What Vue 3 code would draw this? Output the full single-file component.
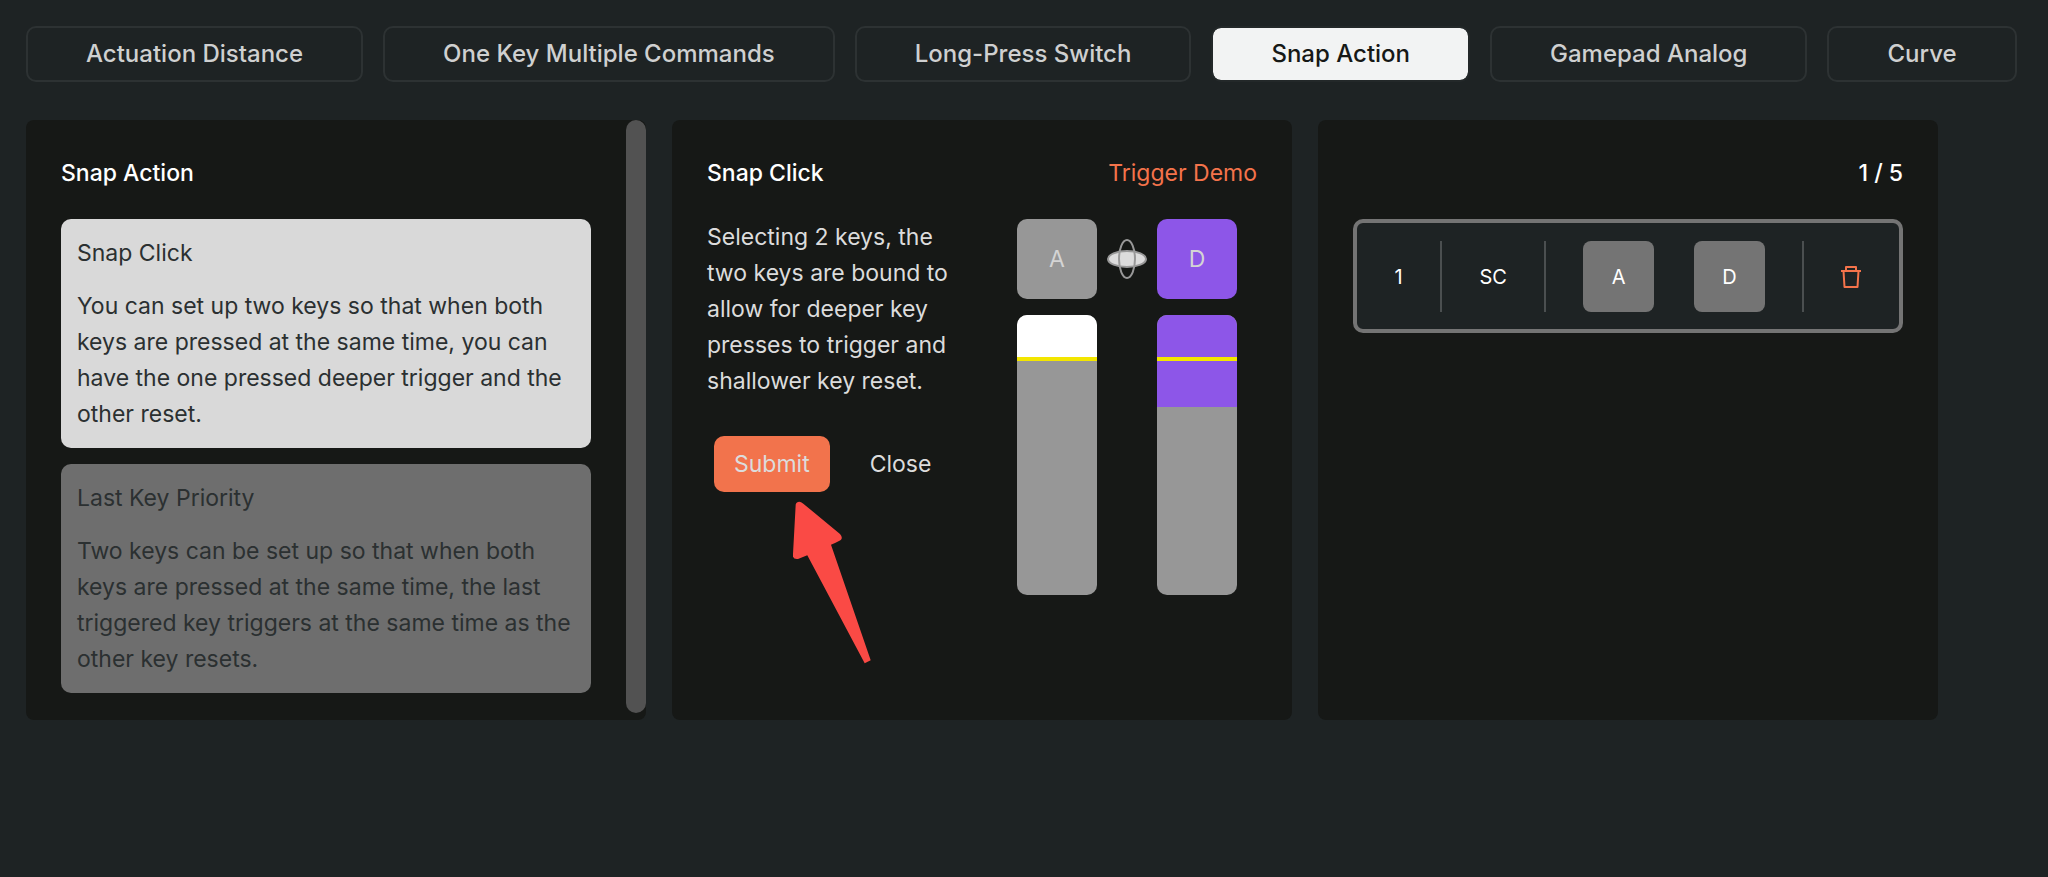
<script setup>
import { ref } from 'vue'

const tabs = [
  'Actuation Distance',
  'One Key Multiple Commands',
  'Long-Press Switch',
  'Snap Action',
  'Gamepad Analog',
  'Curve',
]
const activeTab = ref('Snap Action')

const modes = [
  {
    name: 'Snap Click',
    text: 'You can set up two keys so that when both keys are pressed at the same time, you can have the one pressed deeper trigger and the other reset.',
  },
  {
    name: 'Last Key Priority',
    text: 'Two keys can be set up so that when both keys are pressed at the same time, the last triggered key triggers at the same time as the other key resets.',
  },
]
const activeMode = ref('Snap Click')

const demoKeys = [
  { label: 'A', depth: 15, tone: 'idle' },
  { label: 'D', depth: 33, tone: 'live' },
]

const records = ref([{ id: 1, type: 'SC', keys: ['A', 'D'] }])
const maxRecords = 5

function removeRecord(id) {
  records.value = records.value.filter((r) => r.id !== id)
}
</script>

<template>
  <main class="page">
    <nav class="tabs" aria-label="Key features">
      <button
        v-for="tab in tabs"
        :key="tab"
        type="button"
        class="tab"
        :class="{ active: tab === activeTab }"
        @click="activeTab = tab"
      >{{ tab }}</button>
    </nav>

    <div class="panels">
      <section class="panel modes">
        <div class="modes-body">
          <h2 class="title">Snap Action</h2>
          <div class="cards">
            <button
              v-for="mode in modes"
              :key="mode.name"
              type="button"
              class="card"
              :class="{ selected: mode.name === activeMode }"
              @click="activeMode = mode.name"
            >
              <span class="card-name">{{ mode.name }}</span>
              <span class="card-text">{{ mode.text }}</span>
            </button>
          </div>
        </div>
        <div class="scroll-track"><div class="scroll-thumb"></div></div>
      </section>

      <section class="panel padded">
        <header class="panel-head">
          <h2 class="title">Snap Click</h2>
          <span class="demo-label">Trigger Demo</span>
        </header>
        <div class="detail">
          <div class="detail-copy">
            <p class="detail-text">Selecting 2 keys, the two keys are bound to allow for deeper key presses to trigger and shallower key reset.</p>
            <div class="actions">
              <button type="button" class="btn primary">Submit</button>
              <button type="button" class="btn">Close</button>
              <svg class="pointer" width="85" height="166" viewBox="0 0 85 166" aria-hidden="true">
                <path
                  d="M5.7 4.5 Q6.5 1.7 9.3 1.7 Q11 1.7 13 3.4 L50 34 Q53 37.5 51 39.8 Q50 41 41 44.7 L80.7 160.3 L74.7 163.3 L17.3 55.3 L8 59 Q4 59.5 3 56.7 L3 54 Z"
                  fill="#fa4a45"
                />
              </svg>
            </div>
          </div>
          <div class="demo">
            <div class="demo-key" :class="demoKeys[0].tone">{{ demoKeys[0].label }}</div>
            <svg class="orbit" width="42" height="42" viewBox="0 0 42 42" aria-hidden="true">
              <ellipse cx="21" cy="21" rx="19" ry="8" fill="#dcdcdc" stroke="#989898" stroke-width="2" />
              <ellipse cx="21" cy="21" rx="8" ry="19" fill="none" stroke="#989898" stroke-width="2" />
            </svg>
            <div class="demo-key" :class="demoKeys[1].tone">{{ demoKeys[1].label }}</div>
            <div v-for="k in demoKeys" :key="k.label" class="travel" :class="k.tone">
              <div class="travel-fill" :style="{ height: k.depth + '%' }"></div>
              <div class="travel-mark"></div>
            </div>
          </div>
        </div>
      </section>

      <section class="panel padded">
        <header class="panel-head end">
          <span class="title">{{ records.length }} / {{ maxRecords }}</span>
        </header>
        <div v-for="r in records" :key="r.id" class="record">
          <div class="cell">{{ r.id }}</div>
          <div class="cell">{{ r.type }}</div>
          <div class="cell keys">
            <span v-for="k in r.keys" :key="k" class="record-key">{{ k }}</span>
          </div>
          <div class="cell">
            <button type="button" class="trash" aria-label="Delete" @click="removeRecord(r.id)">
              <svg width="22" height="24" viewBox="0 0 22 24" fill="none" stroke="#f4734b" stroke-width="2">
                <path d="M1 6 H21 M6 6 V2 H16 V6 M3.5 6 L4.5 22 H17.5 L18.5 6" stroke-linejoin="round" />
              </svg>
            </button>
          </div>
        </div>
      </section>
    </div>
  </main>
</template>

<style>
body {
  background: #1e2324;
}
</style>

<style scoped>
.page {
  box-sizing: border-box;
  min-height: 100vh;
  padding: 26px;
  background: #1e2324;
  color: #fff;
  font-family: Inter, "Liberation Sans", sans-serif;
  font-size: 23px;
  line-height: 36px;
}

.page *,
.page *::before {
  box-sizing: border-box;
}

button {
  margin: 0;
  padding: 0;
  border: 0;
  background: none;
  color: inherit;
  font: inherit;
  cursor: pointer;
}

.tabs {
  display: flex;
  gap: 20px;
}

.tab {
  height: 56px;
  padding: 0 58px;
  border: 2px solid #2d3233;
  border-radius: 10px;
  color: #cfd0d0;
  font-size: 24px;
  font-weight: 500;
  white-space: nowrap;
}

.tab.active {
  background: #f2f3f3;
  background-clip: padding-box;
  border-color: #232829;
  color: #161816;
}

.panels {
  display: grid;
  grid-template-columns: repeat(3, minmax(0, 1fr));
  gap: 26px;
  margin: 38px 84px 0 0;
}

.panel {
  min-height: 600px;
  border-radius: 8px;
  background: #161816;
}

.padded {
  padding: 35px 35px 26px;
}

.title {
  margin: 0;
  font-size: 23px;
  font-weight: 500;
}

.modes {
  display: flex;
}

.modes-body {
  flex: 1;
  min-width: 0;
  padding: 35px 35px 26px;
}

.scroll-track {
  width: 20px;
  padding-bottom: 7px;
}

.scroll-thumb {
  height: 100%;
  border-radius: 10px;
  background: #525252;
}

.cards {
  display: flex;
  flex-direction: column;
  gap: 16px;
  margin-top: 28px;
}

.card {
  display: flex;
  flex-direction: column;
  gap: 17px;
  padding: 16px;
  border-radius: 10px;
  background: #6e6e6e;
  color: #2b3031;
  text-align: left;
}

.card.selected {
  background: #d9d9d9;
}

.panel-head {
  display: flex;
  justify-content: space-between;
  margin: 0 0 28px;
}

.panel-head.end {
  justify-content: flex-end;
}

.demo-label {
  color: #f4734b;
}

.detail {
  display: flex;
  justify-content: space-between;
}

.detail-copy {
  flex: 0 1 250px;
  color: #dcdcdc;
}

.detail-text {
  margin: 0;
}

.actions {
  position: relative;
  display: flex;
  gap: 20px;
  margin: 37px 0 0 7px;
}

.btn {
  height: 56px;
  padding: 0 20px;
  border-radius: 10px;
}

.btn.primary {
  background: #f2734c;
}

.pointer {
  position: absolute;
  top: 64px;
  left: 76px;
}

.demo {
  display: grid;
  grid-template-columns: 80px 80px;
  justify-content: space-between;
  align-content: start;
  gap: 16px 0;
  position: relative;
  width: 220px;
  margin-right: 20px;
}

.demo-key {
  display: flex;
  align-items: center;
  justify-content: center;
  height: 80px;
  border-radius: 10px;
  background: #979797;
  color: #d4d4d4;
}

.demo-key.live {
  background: #8d56e8;
}

.orbit {
  position: absolute;
  top: 19px;
  left: 89px;
}

.travel {
  position: relative;
  height: 280px;
  border-radius: 10px;
  background: #979797;
  overflow: hidden;
}

.travel-fill {
  background: #fff;
}

.travel.live .travel-fill {
  background: #8d56e8;
}

.travel-mark {
  position: absolute;
  top: 15%;
  left: 0;
  right: 0;
  height: 4px;
  background: #f3e600;
}

.record {
  display: grid;
  grid-template-columns: 83fr 104fr 257fr 97fr;
  padding: 18px 0 17px;
  border: 4px solid #747474;
  border-radius: 10px;
  background: #1e2324;
  font-size: 20px;
}

.cell {
  display: flex;
  align-items: center;
  justify-content: center;
  height: 71px;
  border-left: 2px solid #4b4f50;
}

.cell:first-child {
  border-left: 0;
}

.keys {
  gap: 40px;
}

.record-key {
  display: flex;
  align-items: center;
  justify-content: center;
  width: 71px;
  height: 71px;
  border-radius: 8px;
  background: #747474;
}

.trash {
  display: flex;
}
</style>
